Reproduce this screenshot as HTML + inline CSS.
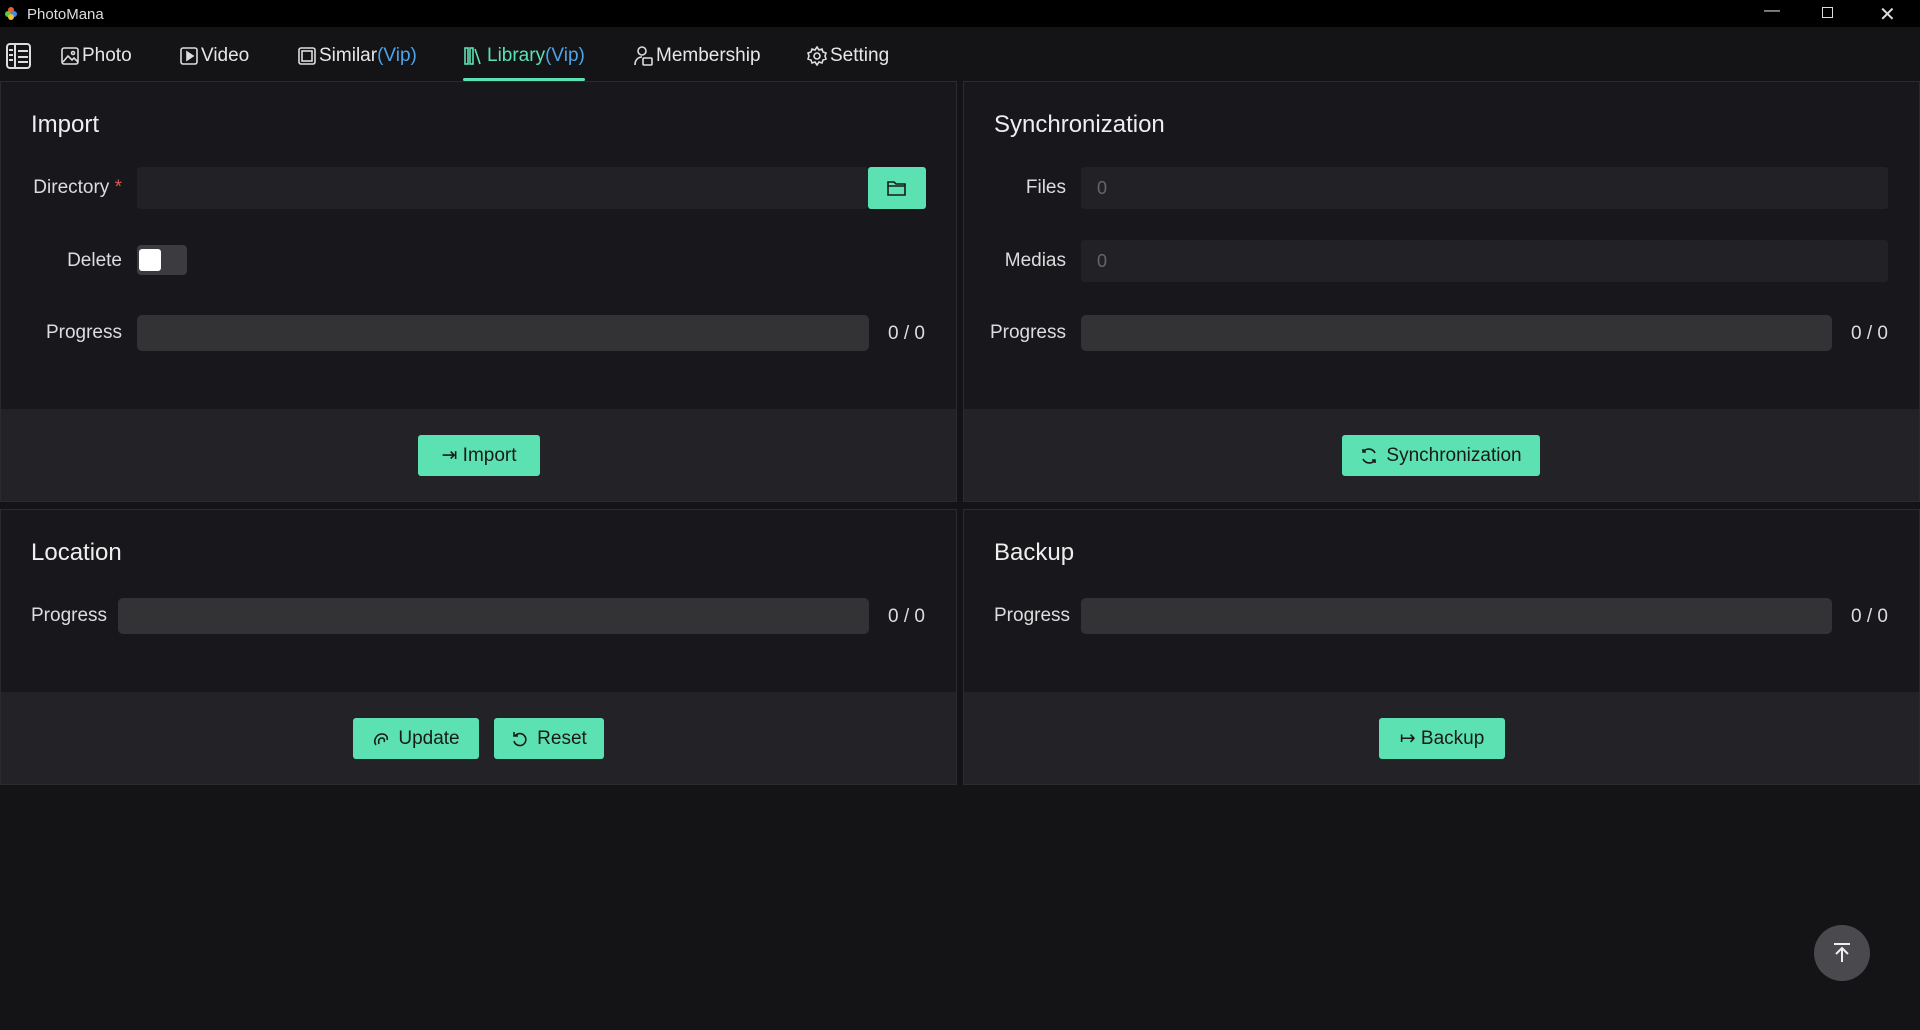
<!DOCTYPE html>
<html><head><meta charset="utf-8"><style>
*{box-sizing:border-box;margin:0;padding:0}
body{width:1920px;height:1030px;background:#141417;font-family:"Liberation Sans",sans-serif;color:#e8e8e8;position:relative;overflow:hidden}
.abs{position:absolute}
.title{left:0;top:0;width:1920px;height:27px;background:#000;font-size:15px;color:#ddd}
.nav{top:27px;left:0;width:1920px;height:54px;background:#141417}
.tab{position:absolute;top:44px;font-size:19px;color:#e6e6e6;display:flex;align-items:center;line-height:24px}
.tab svg{margin-right:3px}
.panel{position:absolute;background:#18181c;border:1px solid #2a2a2f}
.foot{position:absolute;left:0;right:0;bottom:0;background:#222227}
.h{position:absolute;font-size:24px;color:#eee}
.lbl{position:absolute;font-size:19px;color:#ddd;text-align:right}
.inp{position:absolute;background:#222226;border-radius:3px;font-size:18px;color:#666;padding-left:16px;display:flex;align-items:center}
.bar{position:absolute;background:#333336;border-radius:5px}
.btn{position:absolute;background:#5ce2b2;border-radius:3px;color:#1a1a1a;font-size:19px;display:flex;align-items:center;justify-content:center;gap:8px}
.cnt{position:absolute;font-size:19px;color:#ddd}
</style></head><body>
<div class="abs title">
 <svg class="abs" style="left:4px;top:6px" width="14" height="15" viewBox="0 0 14 15"><circle cx="7" cy="4" r="3" fill="#f05a3a"/><circle cx="4" cy="8" r="3" fill="#5bc84a"/><circle cx="10" cy="8" r="3" fill="#3a8ef0"/><circle cx="7" cy="11" r="3" fill="#f0c030"/></svg>
 <span class="abs" style="left:27px;top:6px">PhotoMana</span>
 <span class="abs" style="left:1764px;top:2px;font-size:16px">&#8212;</span>
 <span class="abs" style="left:1822px;top:7px;width:11px;height:11px;border:1.5px solid #ddd"></span>
 <span class="abs" style="left:1879px;top:2px;font-size:20px">&#10005;</span>
</div>
<div class="abs nav"></div>
<svg class="abs" style="left:6px;top:43px" width="25" height="26" viewBox="0 0 25 26" fill="none" stroke="#ddd" stroke-width="2"><rect x="1" y="1" width="23" height="24" rx="3"/><path d="M9 1v24M3 7h4M3 12h4M3 17h4M12 8h10M12 14h10M12 19h10"/></svg>
<div class="tab" style="left:61px"><svg width="18" height="18" viewBox="0 0 18 18" fill="none" stroke="#ddd" stroke-width="1.6"><rect x="1" y="1" width="16" height="16" rx="2"/><path d="M2 15l5-6 4 4 2-2 4 4"/><circle cx="12" cy="6" r="1.5"/></svg>Photo</div>
<div class="tab" style="left:180px"><svg width="18" height="18" viewBox="0 0 18 18" fill="none" stroke="#ddd" stroke-width="1.6"><rect x="1" y="1" width="16" height="16" rx="2"/><path d="M7 5l6 4-6 4z" fill="#ddd"/></svg>Video</div>
<div class="tab" style="left:298px"><svg width="18" height="18" viewBox="0 0 18 18" fill="none" stroke="#ddd" stroke-width="1.6"><rect x="1" y="1" width="16" height="16" rx="2"/><rect x="4" y="4" width="10" height="10"/></svg>Similar<span style="color:#4da3e8">(Vip)</span></div>
<div class="tab" style="left:464px;color:#5ce2b2"><svg width="20" height="18" viewBox="0 0 20 18" fill="none" stroke="#5ce2b2" stroke-width="1.6"><rect x="1" y="1" width="3" height="16"/><rect x="6" y="1" width="3" height="16"/><path d="M11 2l5 15"/></svg>Library<span style="color:#4da3e8">(Vip)</span></div>
<div class="abs" style="left:463px;top:78px;width:122px;height:3px;background:#5ce2b2;border-radius:2px"></div>
<div class="tab" style="left:633px"><svg width="20" height="20" viewBox="0 0 20 20" fill="none" stroke="#ddd" stroke-width="1.6"><circle cx="9" cy="5" r="4"/><path d="M2 19c0-5 3-8 7-8"/><rect x="10" y="12" width="9" height="7" rx="1"/></svg>Membership</div>
<div class="tab" style="left:807px"><svg width="20" height="20" viewBox="0 0 20 20" fill="none" stroke="#ddd" stroke-width="1.6"><circle cx="10" cy="10" r="3"/><path d="M10 1l2 3 3-1 1 3 3 1-1 3 1 3-3 1-1 3-3-1-2 3-2-3-3 1-1-3-3-1 1-3-1-3 3-1 1-3 3 1z"/></svg>Setting</div>

<div class="panel" style="left:0;top:81px;width:957px;height:421px"><div class="foot" style="height:92px"></div></div>
<div class="h" style="left:31px;top:111px">Import</div>
<div class="lbl" style="left:20px;top:177px;width:102px">Directory <span style="color:#e05555">*</span></div>
<div class="inp" style="left:137px;top:167px;width:731px;height:42px"></div>
<div class="btn" style="left:868px;top:167px;width:58px;height:42px"><svg width="20" height="16" viewBox="0 0 20 16" fill="none" stroke="#1a1a1a" stroke-width="1.6"><path d="M1 2h6l2 2h9v11H1z M1 6h17"/></svg></div>
<div class="lbl" style="left:20px;top:250px;width:102px">Delete</div>
<div class="abs" style="left:137px;top:245px;width:50px;height:30px;background:#3c3c40;border-radius:4px"><div class="abs" style="left:2px;top:4px;width:22px;height:22px;background:#fff;border-radius:3px"></div></div>
<div class="lbl" style="left:20px;top:322px;width:102px">Progress</div>
<div class="bar" style="left:137px;top:315px;width:732px;height:36px"></div>
<div class="cnt" style="left:888px;top:323px">0 / 0</div>
<div class="btn" style="left:418px;top:435px;width:122px;height:41px">&#8677; Import</div>

<div class="panel" style="left:963px;top:81px;width:957px;height:421px"><div class="foot" style="height:92px"></div></div>
<div class="h" style="left:994px;top:111px">Synchronization</div>
<div class="lbl" style="left:980px;top:177px;width:86px">Files</div>
<div class="inp" style="left:1081px;top:167px;width:807px;height:42px">0</div>
<div class="lbl" style="left:980px;top:250px;width:86px">Medias</div>
<div class="inp" style="left:1081px;top:240px;width:807px;height:42px">0</div>
<div class="lbl" style="left:980px;top:322px;width:86px">Progress</div>
<div class="bar" style="left:1081px;top:315px;width:751px;height:36px"></div>
<div class="cnt" style="left:1851px;top:323px">0 / 0</div>
<div class="btn" style="left:1342px;top:435px;width:198px;height:41px"><svg width="18" height="18" viewBox="0 0 18 18" fill="none" stroke="#1a1a1a" stroke-width="1.6"><path d="M15 6A7 7 0 0 0 3 5M3 12a7 7 0 0 0 12 1M3 2v3h3M15 16v-3h-3"/></svg>Synchronization</div>

<div class="panel" style="left:0;top:509px;width:957px;height:276px"><div class="foot" style="height:92px"></div></div>
<div class="h" style="left:31px;top:539px">Location</div>
<div class="lbl" style="left:31px;top:605px">Progress</div>
<div class="bar" style="left:118px;top:598px;width:751px;height:36px"></div>
<div class="cnt" style="left:888px;top:606px">0 / 0</div>
<div class="btn" style="left:353px;top:718px;width:126px;height:41px"><svg width="18" height="18" viewBox="0 0 18 18" fill="none" stroke="#1a1a1a" stroke-width="1.6"><path d="M4 15c-3-4 0-11 6-11 4 0 6 3 5 6M7 14c-1-3 0-6 3-6 2 0 3 2 2 4"/></svg>Update</div>
<div class="btn" style="left:494px;top:718px;width:110px;height:41px"><svg width="18" height="18" viewBox="0 0 18 18" fill="none" stroke="#1a1a1a" stroke-width="1.6"><path d="M4 6a6 6 0 1 1-1 5M3 2v4h4"/></svg>Reset</div>

<div class="panel" style="left:963px;top:509px;width:957px;height:276px"><div class="foot" style="height:92px"></div></div>
<div class="h" style="left:994px;top:539px">Backup</div>
<div class="lbl" style="left:994px;top:605px">Progress</div>
<div class="bar" style="left:1081px;top:598px;width:751px;height:36px"></div>
<div class="cnt" style="left:1851px;top:606px">0 / 0</div>
<div class="btn" style="left:1379px;top:718px;width:126px;height:41px">&#8614; Backup</div>

<div class="abs" style="left:1814px;top:925px;width:56px;height:56px;border-radius:50%;background:#4a4a4e;display:flex;align-items:center;justify-content:center"><svg width="24" height="24" viewBox="0 0 24 24" fill="none" stroke="#eee" stroke-width="2"><path d="M4 3h16M12 21V8M6 13l6-6 6 6"/></svg></div>
</body></html>
